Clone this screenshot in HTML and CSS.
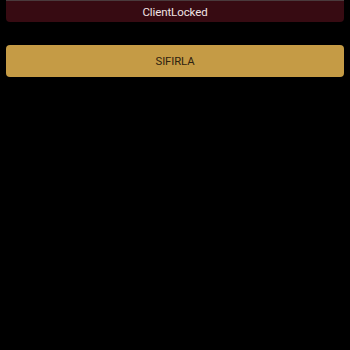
FILE: index.html
```html
<!DOCTYPE html>
<html>
<head>
<meta charset="utf-8">
<link rel="stylesheet" href="styles.css">
</head>
<body>
<div class="page">
  <div class="status">ClientLocked</div>
  <button class="reset">SIFIRLA</button>
</div>
</body>
</html>
```
FILE: styles.css
```css
html, body {
  margin: 0;
  padding: 0;
  background: #000;
  width: 350px;
  height: 350px;
  overflow: hidden;
}
.page {
  display: flex;
  flex-direction: column;
  padding: 0 6px;
  gap: 23px;
  font-family: Roboto, "Liberation Sans", sans-serif;
}
.status {
  height: 22px;
  background: #370b12;
  border-top: 1px solid #4a3a3c;
  border-radius: 0 0 4px 4px;
  box-sizing: border-box;
  color: #efe3e3;
  font-size: 11.5px;
  letter-spacing: -0.1px;
  display: flex;
  align-items: center;
  justify-content: center;
  padding-top: 1px;
}
.reset {
  height: 32px;
  border: none;
  border-radius: 4px;
  background: #c59b45;
  color: #2e2210;
  font-family: Roboto, "Liberation Sans", sans-serif;
  font-size: 11.3px;
  letter-spacing: -0.1px;
  padding: 0;
  display: flex;
  align-items: center;
  justify-content: center;
  box-shadow: 0 1px 2px rgba(0,0,0,0.5);
}
```
